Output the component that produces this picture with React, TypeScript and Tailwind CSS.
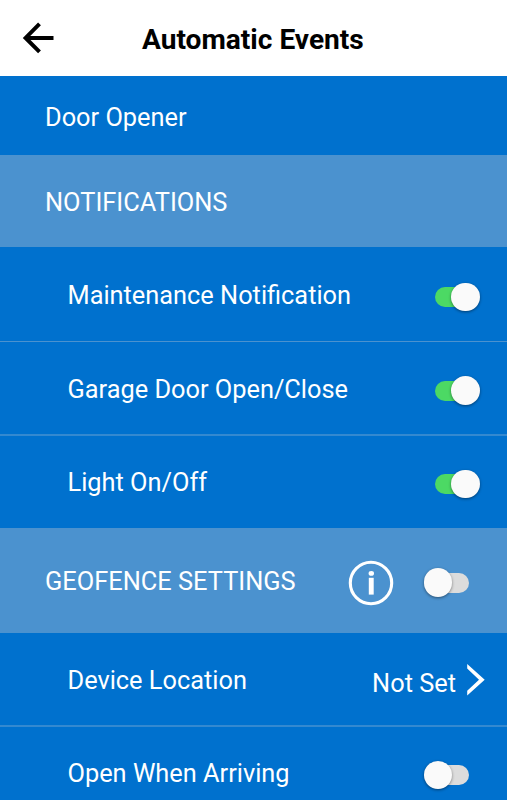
import { useState } from 'react';
import clsx from 'clsx';

interface ToggleProps {
  label: string;
  initial?: boolean;
}

function Toggle({ label, initial = false }: ToggleProps) {
  const [on, setOn] = useState(initial);

  return (
    <button
      type="button"
      role="switch"
      aria-label={label}
      aria-checked={on}
      onClick={() => setOn(!on)}
      className={clsx('relative flex h-[29px] w-[57px] items-center', on ? 'pl-[11px]' : 'pl-[5px]')}
    >
      <span className={clsx('h-5 w-10 rounded-full', on ? 'bg-[#4cd964]' : 'bg-[#dcdcdc]')} />
      <span
        className={clsx(
          'absolute top-0 h-[28.5px] w-[28.5px] rounded-full bg-[#fafafa] shadow-[0_1px_3px_rgba(0,0,0,0.45)]',
          on ? 'left-[27px]' : 'left-[-0.5px]'
        )}
      />
    </button>
  );
}

function InfoIcon() {
  return (
    <svg className="h-[46px] w-[46px]" viewBox="0 0 46 46" fill="none">
      <circle cx="23" cy="23" r="20.7" stroke="white" strokeWidth="3.1" />
      <ellipse cx="23.3" cy="13.4" rx="2.7" ry="2.4" fill="white" />
      <rect x="20.8" y="17.8" width="4.9" height="16.8" fill="white" />
    </svg>
  );
}

export default function App() {
  return (
    <div className="flex h-[800px] w-full flex-col overflow-hidden bg-[#0071ce] font-['Roboto','Liberation_Sans',sans-serif] text-[25.35px] leading-8 text-white">
      <header className="grid h-[76px] shrink-0 grid-cols-[142px_1fr] items-center bg-white text-black">
        <button type="button" aria-label="Back" className="pl-[22px]">
          <svg className="h-8 w-8" viewBox="0 0 32 32" fill="none" stroke="black" strokeWidth="4">
            <path d="M17.5 1.9L3.6 15.9L17.5 29.9M3.5 15.9H31.5" />
          </svg>
        </button>
        <h1 className="pt-[3px] text-[28.1px] font-bold">Automatic Events</h1>
      </header>

      <div className="flex h-[79px] shrink-0 items-center pt-[3px] pl-[45px]">Door Opener</div>

      <div className="flex h-[92px] shrink-0 items-center bg-[#4b92cf] pt-px pl-[45px] text-[25.4px]">NOTIFICATIONS</div>

      <div className="flex h-[95px] shrink-0 items-center justify-between border-b border-[#4b92cf] pt-[6px] pr-[26px] pl-[67.5px]">
        <span className="pb-[5px]">Maintenance Notification</span>
        <Toggle label="Maintenance Notification" initial />
      </div>
      <div className="flex h-[94px] shrink-0 items-center justify-between border-b-2 border-[#3489d0] pt-[5px] pr-[26px] pl-[67.5px]">
        <span className="pb-[4px]">Garage Door Open/Close</span>
        <Toggle label="Garage Door Open/Close" initial />
      </div>
      <div className="flex h-[92px] shrink-0 items-center justify-between pt-[4px] pr-[26px] pl-[67.5px]">
        <span className="pb-[4px]">Light On/Off</span>
        <Toggle label="Light On/Off" initial />
      </div>

      <div className="flex h-[105px] shrink-0 items-center bg-[#4b92cf] pt-[4px] pr-[26px] pl-[45px] text-[25.4px]">
        <span className="flex-1 pb-[4px]">GEOFENCE SETTINGS</span>
        <button type="button" aria-label="Geofence info" className="mr-[30px]">
          <InfoIcon />
        </button>
        <Toggle label="Geofence Settings" />
      </div>

      <div className="flex h-[94px] shrink-0 items-center border-b-2 border-[#3489d0] pt-[2px] pr-[22px] pl-[67.5px]">
        <span className="flex-1">Device Location</span>
        <span className="pt-[6px]">Not Set</span>
        <svg className="ml-[10px] h-8 w-[19px]" viewBox="0 0 19 32" fill="white">
          <path d="M1.2 0L18.7 15.7L1.2 31.4V26.8L13 15.7L1.2 4.6Z" />
        </svg>
      </div>
      <div className="flex h-[94px] shrink-0 items-center justify-between pt-[2px] pr-[26px] pl-[67.5px]">
        <span className="pb-[5px]">Open When Arriving</span>
        <Toggle label="Open When Arriving" />
      </div>
    </div>
  );
}
